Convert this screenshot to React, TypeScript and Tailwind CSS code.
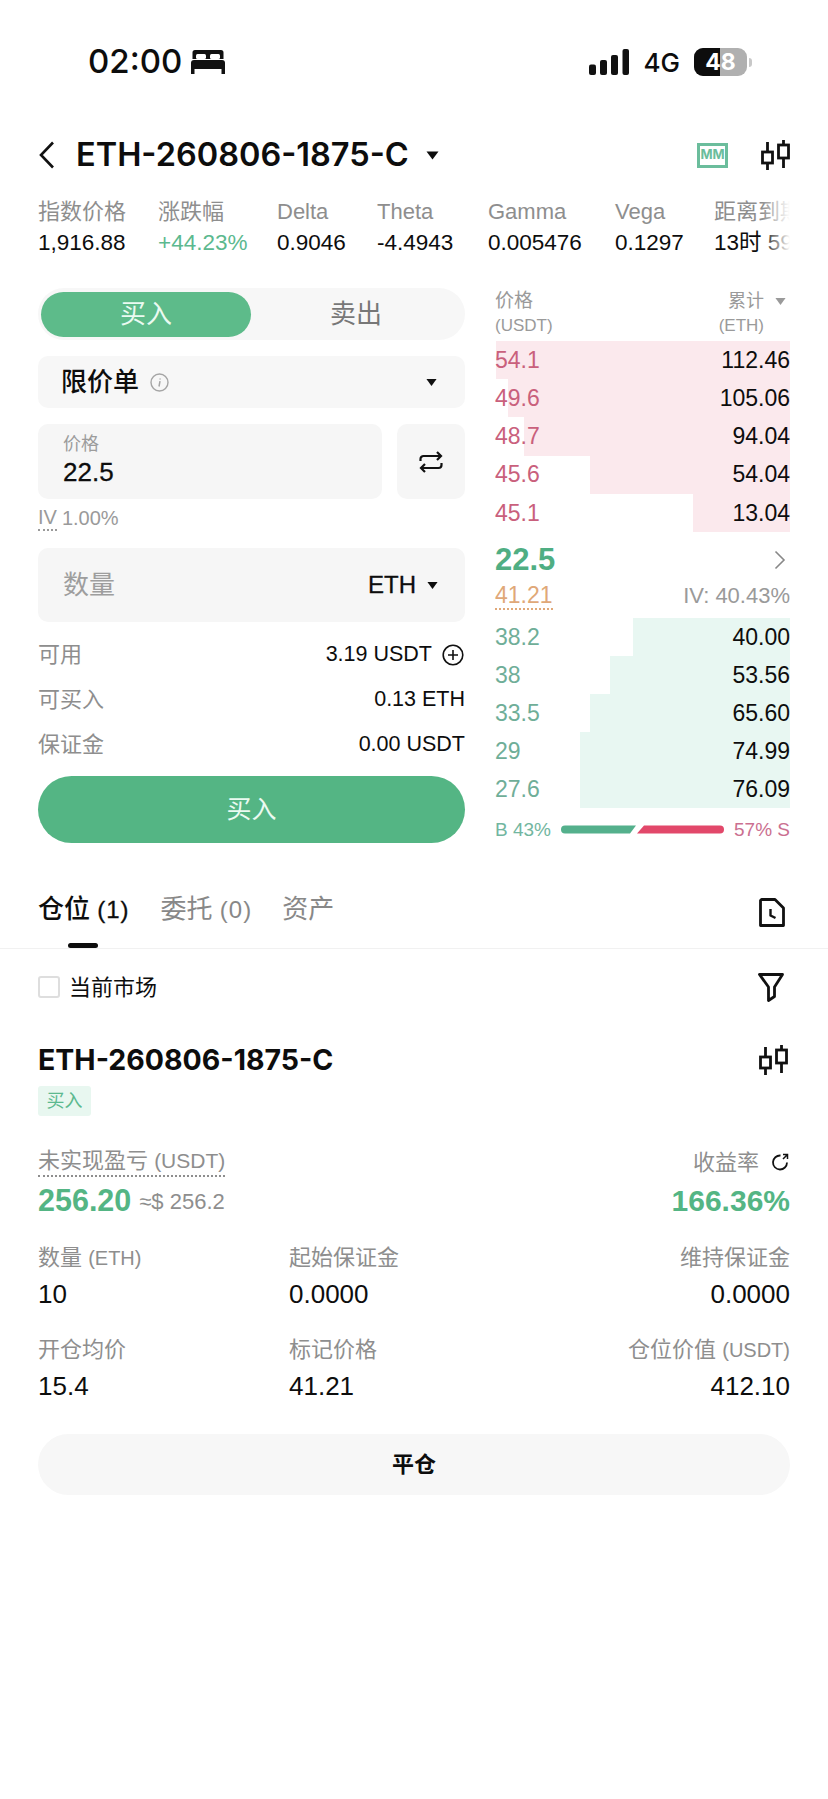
import React from "react";

const asks = [
  { price: "54.1", total: "112.46", width: 294 },
  { price: "49.6", total: "105.06", width: 282 },
  { price: "48.7", total: "94.04", width: 266 },
  { price: "45.6", total: "54.04", width: 200 },
  { price: "45.1", total: "13.04", width: 97 },
];

const bids = [
  { price: "38.2", total: "40.00", width: 157 },
  { price: "38", total: "53.56", width: 180 },
  { price: "33.5", total: "65.60", width: 200 },
  { price: "29", total: "74.99", width: 210 },
  { price: "27.6", total: "76.09", width: 210 },
];

const stats = [
  { label: "指数价格", value: "1,916.88", width: "w-[120px]" },
  { label: "涨跌幅", value: "+44.23%", width: "w-[119px]", green: true },
  { label: "Delta", value: "0.9046", width: "w-[100px]" },
  { label: "Theta", value: "-4.4943", width: "w-[111px]" },
  { label: "Gamma", value: "0.005476", width: "w-[127px]" },
  { label: "Vega", value: "0.1297", width: "w-[99px]" },
  { label: "距离到期", value: "13时 59分", width: "w-[120px]" },
];

const Caret = ({ className = "" }: { className?: string }) => (
  <svg width="13" height="9" viewBox="0 0 13 9" className={className}>
    <path d="M0.5 0.5h12L6.5 8.5z" fill="currentColor" />
  </svg>
);

const CandleIcon = () => (
  <svg width="29" height="31" viewBox="0 0 29 31" fill="none" stroke="#111" strokeWidth="2.8">
    <path d="M6.5 2v28M22.5 0v28" />
    <rect x="1.5" y="12" width="10" height="11" fill="#fff" />
    <rect x="17.5" y="5" width="10" height="13" fill="#fff" />
  </svg>
);

const Field = ({ label, value, right }: { label: React.ReactNode; value: string; right?: boolean }) => (
  <div className={right ? "text-right" : ""}>
    <div className="h-[30px] leading-[30px] text-[22px] text-[#8e8e8e]">{label}</div>
    <div className="mt-[4px] h-[34px] leading-[34px] text-[26px] text-[#0d0d0d]">{value}</div>
  </div>
);

export default function App() {
  return (
    <div className="w-[828px] min-h-[1799px] bg-white overflow-hidden font-['Liberation_Sans','Noto_Sans_CJK_SC',sans-serif] text-[#0d0d0d]">
      {/* status bar */}
      <div className="mt-[44px] h-[36px] pl-[88px] pr-[76px] flex items-center font-['Inter',sans-serif]">
        <span className="text-[33px] font-medium">02:00</span>
        <svg width="34" height="24" viewBox="0 0 34 24" className="ml-[9px]" fill="#111">
          <path d="M4 0h26a2.5 2.5 0 0 1 2.5 2.5V9h-31V2.5A2.5 2.5 0 0 1 4 0z" />
          <rect x="5" y="4" width="10" height="5" rx="1.5" fill="#fff" />
          <rect x="19" y="4" width="10" height="5" rx="1.5" fill="#fff" />
          <path d="M3 10h28a3 3 0 0 1 3 3v6H0v-6a3 3 0 0 1 3-3z" />
          <rect x="0" y="19" width="3.5" height="5" />
          <rect x="30.5" y="19" width="3.5" height="5" />
        </svg>
        <svg width="40" height="26" viewBox="0 0 40 26" className="ml-auto" fill="#111">
          <rect x="0" y="15.5" width="7" height="10.5" rx="2" />
          <rect x="11" y="11" width="7" height="15" rx="2" />
          <rect x="22" y="6" width="7" height="20" rx="2" />
          <rect x="33.5" y="0" width="6.5" height="26" rx="2" />
        </svg>
        <span className="ml-[15px] text-[26px] font-medium">4G</span>
        <div className="ml-[14px] relative w-[53px] h-[28px] rounded-[9px] bg-[#b0b0b0] overflow-hidden flex items-center justify-center">
          <div className="absolute left-0 top-0 bottom-0 w-[26px] bg-[#0d0d0d]" />
          <span className="relative text-[23px] font-bold text-white">48</span>
        </div>
        <div className="ml-[2px] w-[3px] h-[9px] rounded-r-[3px] bg-[#c8c8c8]" />
      </div>

      {/* title */}
      <div className="mt-[55px] h-[40px] px-[38px] flex items-center">
        <svg width="17" height="28" viewBox="0 0 17 28" fill="none" stroke="#111" strokeWidth="2.6">
          <path d="M15 1.5L3 14l12 12.5" />
        </svg>
        <span className="ml-[21px] text-[32.5px] font-semibold leading-none font-['Inter',sans-serif]">ETH-260806-1875-C</span>
        <Caret className="ml-[17px]" />
        <div className="ml-auto w-[31px] h-[25px] border-[3px] border-[#6bbd9c] flex items-center justify-center text-[13px] font-bold text-[#6bbd9c] font-['Inter',sans-serif]">
          MM
        </div>
        <div className="ml-[33px]">
          <CandleIcon />
        </div>
      </div>

      {/* stats */}
      <div className="mt-[22px] ml-[38px] w-[752px] overflow-hidden flex relative">
        {stats.map((s) => (
          <div key={s.label} className={`${s.width} shrink-0 whitespace-nowrap`}>
            <div className="h-[30px] leading-[30px] text-[22px] text-[#8e8e8e]">{s.label}</div>
            <div className={`h-[32px] leading-[32px] text-[22.5px] ${s.green ? "text-[#5cb98f]" : "text-[#0d0d0d]"}`}>
              {s.value}
            </div>
          </div>
        ))}
        <div className="absolute right-0 top-0 bottom-0 w-[28px] bg-gradient-to-r from-transparent to-white" />
      </div>

      {/* order form and book */}
      <div className="mt-[29px] px-[38px] flex gap-[30px]">
        <div className="w-[427px]">
          <div className="h-[52px] rounded-[26px] bg-[#f7f7f7] flex items-center pl-[3px]">
            <div className="w-[210px] h-[45px] rounded-[23px] bg-[#5dbb8a] text-[#eafaf1] text-[26px] flex items-center justify-center">
              买入
            </div>
            <div className="flex-1 text-center text-[26px] text-[#777] pr-[4px]">卖出</div>
          </div>

          <div className="mt-[16px] h-[52px] rounded-[10px] bg-[#f7f7f7] pl-[23px] pr-[28px] flex items-center">
            <span className="text-[26px] font-medium">限价单</span>
            <svg width="19" height="19" viewBox="0 0 19 19" className="ml-[11px]" fill="none" stroke="#a5a5a5" strokeWidth="1.4">
              <circle cx="9.5" cy="9.5" r="8.5" />
              <path d="M10 8.2L9 13.5M10.1 5.4v1" strokeWidth="1.5" />
            </svg>
            <Caret className="ml-auto w-[11px] text-[#111]" />
          </div>

          <div className="mt-[16px] flex gap-[15px]">
            <div className="w-[344px] h-[75px] rounded-[10px] bg-[#f6f6f6] pl-[25px] pt-[9px]">
              <div className="text-[18px] leading-[22px] text-[#9c9c9c]">价格</div>
              <div className="text-[26px] leading-[30px] mt-[2px] [-webkit-text-stroke:0.3px_#0d0d0d]">22.5</div>
            </div>
            <div className="w-[68px] h-[75px] rounded-[10px] bg-[#f6f6f6] flex items-center justify-center">
              <svg width="24" height="22" viewBox="0 0 24 22" fill="none" stroke="#111" strokeWidth="2.2">
                <path d="M1.5 10V8a3 3 0 0 1 3-3H22M18 1l4 4-4 4M22.5 12v2a3 3 0 0 1-3 3H2M6 21l-4-4 4-4" />
              </svg>
            </div>
          </div>

          <div className="h-[30px] mt-[4px] flex items-center text-[20px] text-[#9a9a9a]">
            <span className="border-b-2 border-dotted border-[#9a9a9a] leading-[23px]">IV</span>
            <span className="ml-[5px]">1.00%</span>
          </div>

          <div className="mt-[15px] h-[74px] rounded-[10px] bg-[#f6f6f6] pl-[25px] pr-[27px] flex items-center">
            <span className="text-[26px] text-[#9e9e9e]">数量</span>
            <span className="ml-auto text-[24px] [-webkit-text-stroke:0.3px_#0d0d0d]">ETH</span>
            <Caret className="ml-[11px] w-[11px]" />
          </div>

          <div className="mt-[10px]">
            <div className="h-[45px] flex items-center justify-between text-[21.5px]">
              <span className="text-[#8e8e8e] text-[22px]">可用</span>
              <span className="flex items-center pr-[1px]">
                3.19 USDT
                <svg width="22" height="22" viewBox="0 0 22 22" className="ml-[10px]" fill="none" stroke="#111" strokeWidth="1.6">
                  <circle cx="11" cy="11" r="9.8" />
                  <path d="M11 6v10M6 11h10" />
                </svg>
              </span>
            </div>
            <div className="h-[45px] flex items-center justify-between text-[21.5px]">
              <span className="text-[#8e8e8e] text-[22px]">可买入</span>
              <span>0.13 ETH</span>
            </div>
            <div className="h-[45px] flex items-center justify-between text-[21.5px]">
              <span className="text-[#8e8e8e] text-[22px]">保证金</span>
              <span>0.00 USDT</span>
            </div>
          </div>

          <div className="mt-[9px] h-[67px] rounded-[34px] bg-[#54b584] text-[#eafaf1] text-[25px] flex items-center justify-center">
            买入
          </div>
        </div>

        <div className="w-[295px]">
          <div className="h-[53px] flex justify-between text-[#9a9a9a]">
            <div>
              <div className="text-[19px] leading-[26px]">价格</div>
              <div className="text-[17px] leading-[24px]">(USDT)</div>
            </div>
            <div className="pr-[4px] text-right">
              <div className="text-[18px] leading-[26px] flex items-center justify-end">
                累计
                <Caret className="ml-[11px] w-[11px] text-[#9a9a9a]" />
              </div>
              <div className="text-[17px] leading-[24px] pr-[22px]">(ETH)</div>
            </div>
          </div>

          {asks.map((r) => (
            <div key={r.price} className="relative h-[38.2px] flex items-center justify-between text-[23px]">
              <div className="absolute right-0 top-0 bottom-0 bg-[#fbe9ed]" style={{ width: r.width }} />
              <span className="relative text-[#c9607c]">{r.price}</span>
              <span className="relative">{r.total}</span>
            </div>
          ))}

          <div className="h-[86px] pt-[10px]">
            <div className="h-[36px] flex items-center justify-between">
              <span className="text-[31px] font-bold text-[#4fae83]">22.5</span>
              <svg width="12" height="20" viewBox="0 0 12 20" className="mr-[4px]" fill="none" stroke="#888" strokeWidth="1.6">
                <path d="M1.5 1.5L10 10l-8.5 8.5" />
              </svg>
            </div>
            <div className="h-[36px] flex items-center justify-between text-[22px]">
              <span className="text-[23px] text-[#e0a878] border-b-2 border-dotted border-[#e0a878] leading-[26px]">41.21</span>
              <span className="text-[#9a9a9a]">IV: 40.43%</span>
            </div>
          </div>

          {bids.map((r) => (
            <div key={r.price} className="relative h-[38px] flex items-center justify-between text-[23px]">
              <div className="absolute right-0 top-0 bottom-0 bg-[#e8f7f2]" style={{ width: r.width }} />
              <span className="relative text-[#6fae98]">{r.price}</span>
              <span className="relative">{r.total}</span>
            </div>
          ))}

          <div className="mt-[9px] h-[26px] flex items-center justify-between text-[19px]">
            <span className="text-[#72b6a0]">B 43%</span>
            <svg width="163" height="9" viewBox="0 0 163 9">
              <path d="M4 0.5H75L69 8.5H4a4 4 0 0 1 0-8z" fill="#54b08c" />
              <path d="M83 0.5H159a4 4 0 0 1 0 8H76z" fill="#e2486a" />
            </svg>
            <span className="text-[#cb6f90]">57% S</span>
          </div>
        </div>
      </div>

      {/* tabs */}
      <div className="mt-[48px] border-b border-[#f1f1f1]">
        <div className="px-[38px] h-[36px] flex items-center">
          <span className="text-[26px] font-medium">
            仓位 <span className="text-[24px] tracking-[1px] [-webkit-text-stroke:0.3px_#0d0d0d]">(1)</span>
          </span>
          <span className="ml-[31px] text-[26px] text-[#888]">
            委托 <span className="text-[24px] tracking-[1px]">(0)</span>
          </span>
          <span className="ml-[30px] text-[26px] text-[#888]">资产</span>
          <svg width="26" height="29" viewBox="0 0 26 29" className="ml-auto mr-[5px] mt-[6px]" fill="none" stroke="#111" strokeWidth="2.8" strokeLinejoin="round">
            <path d="M2.5 1.5H16l8.5 8.5v17.5H1.5V2.5z" />
            <path d="M11.5 11v6.5l5 2.5" strokeWidth="2.4" />
          </svg>
        </div>
        <div className="mt-[16px] ml-[68px] w-[30px] h-[5px] rounded-[3px] bg-[#0d0d0d]" />
      </div>

      {/* positions */}
      <div className="px-[38px]">
        <div className="h-[76px] flex items-center">
          <div className="w-[22px] h-[22px] rounded-[3px] border-2 border-[#dedede]" />
          <span className="ml-[9px] text-[22px]">当前市场</span>
          <svg width="26" height="30" viewBox="0 0 26 30" className="ml-auto mr-[6px]" fill="none" stroke="#111" strokeWidth="2.8" strokeLinejoin="round">
            <path d="M1.5 2.5h23L16.5 15v9.5l-6 4V15z" />
          </svg>
        </div>

        <div className="mt-[15px] h-[40px] flex items-center justify-between">
          <span className="text-[28.5px] font-bold leading-none font-['Inter',sans-serif]">ETH-260806-1875-C</span>
          <div className="mr-[2px]">
            <CandleIcon />
          </div>
        </div>

        <div className="mt-[6px] w-[53px] h-[30px] rounded-[3px] bg-[#e8f7f0] text-[18px] text-[#5cb98f] flex items-center justify-center">
          买入
        </div>

        <div className="mt-[31px] flex justify-between">
          <div>
            <div className="h-[30px] flex items-center">
              <span className="text-[22px] text-[#8e8e8e] leading-[28px] border-b-2 border-dotted border-[#8e8e8e]">
                未实现盈亏 <span className="text-[21px]">(USDT)</span>
              </span>
            </div>
            <div className="mt-[4px] h-[40px] flex items-center">
              <span className="text-[30.5px] font-bold text-[#54b584]">256.20</span>
              <span className="ml-[8px] text-[22px] text-[#8e8e8e]">≈$ 256.2</span>
            </div>
          </div>
          <div className="text-right">
            <div className="h-[30px] flex items-center justify-end text-[22px] text-[#8e8e8e] pr-[1px]">
              收益率
              <svg width="18" height="18" viewBox="0 0 18 18" className="ml-[12px]" fill="none" stroke="#111" strokeWidth="1.8">
                <path d="M9.5 2.5a7 7 0 1 0 6.5 7" />
                <path d="M12 1.5h4.5V6M16.5 1.5L12 6" strokeWidth="1.5" />
              </svg>
            </div>
            <div className="mt-[4px] h-[40px] leading-[40px] text-[30px] font-bold text-[#54b584]">166.36%</div>
          </div>
        </div>

        <div className="mt-[22px] grid grid-cols-[251px_1fr_auto] gap-y-[24px]">
          <Field label={<>数量 <span className="text-[20px]">(ETH)</span></>} value="10" />
          <Field label="起始保证金" value="0.0000" />
          <Field label="维持保证金" value="0.0000" right />
          <Field label="开仓均价" value="15.4" />
          <Field label="标记价格" value="41.21" />
          <Field label={<>仓位价值 <span className="text-[20px]">(USDT)</span></>} value="412.10" right />
        </div>

        <div className="mt-[31px] h-[61px] rounded-[31px] bg-[#f7f7f7] text-[22px] font-bold flex items-center justify-center">
          平仓
        </div>
      </div>
    </div>
  );
}
